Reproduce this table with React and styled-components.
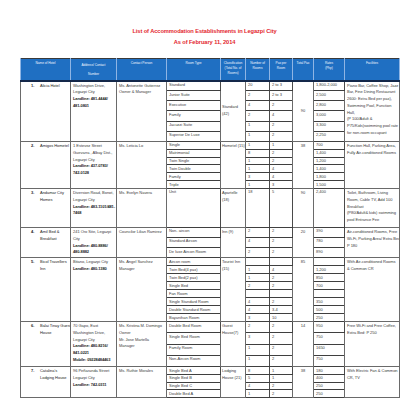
import React from "react";
import styled, { createGlobalStyle } from "styled-components";

const GlobalStyle = createGlobalStyle`
	html, body {
		margin: 0;
		padding: 0;
		background: #ffffff;
	}
	body {
		font-family: "Liberation Sans", Arial, sans-serif;
	}
`;

const Page = styled.div`
	width: 419px;
	height: 419px;
	padding-top: 26px;
	box-sizing: border-box;
	overflow: hidden;
`;

const Title = styled.div`
	text-align: center;
	color: #e3262d;
	font-weight: bold;
	font-size: 5.7px;
	letter-spacing: -0.08px;
	line-height: 11px;
	margin: 0 0 10px -10px;
`;

const Table = styled.table`
	width: 379px;
	margin-left: 20px;
	border-collapse: collapse;
	table-layout: fixed;
	border: 1px solid #3a3a3a;
	font-size: 4px;
	letter-spacing: -0.03px;
	color: #3c3c3c;
`;

const HeadRow = styled.tr`
	height: 22px;
	background: #1f6fc2;
	border-bottom: 2px solid #14284a;
`;

const HeadCell = styled.th`
	color: #f2f6ff;
	font-weight: normal;
	font-size: 3.2px;
	line-height: ${props => (props.$loose ? "9px" : "5px")};
	vertical-align: top;
	text-align: center;
	white-space: nowrap;
	padding: 1.5px 0 0 0;
	border-left: 1px solid #8fb5e4;
	border-right: 1px solid #8fb5e4;
`;

const Row = styled.tr`
	height: ${props => props.$h}px;
`;

const Cell = styled.td`
	border: 1px solid #6a6a6a;
	padding: 1px ${props => (props.$tight ? "1px" : "2px")};
	line-height: 6.8px;
	vertical-align: ${props => (props.$middle ? "middle" : "top")};
	text-align: ${props => (props.$center ? "center" : "left")};
	white-space: nowrap;
	overflow: hidden;
`;

const SubCell = styled.td`
	border: 1px solid #4a4a4a;
	border-bottom: ${props => (props.$last ? "1px" : "1.5px")} solid #3f3f3f;
	padding: 0.5px 2px;
	line-height: 5.5px;
	vertical-align: top;
	white-space: nowrap;
	overflow: hidden;
	color: #404040;
`;

const Line = styled.div`
	font-weight: ${props => (props.$bold ? "bold" : "normal")};
	letter-spacing: ${props => (props.$bold ? "-0.12px" : "inherit")};
	color: ${props => (props.$bold ? "#1c1c1c" : "inherit")};
`;

const NameWrap = styled.div`
	display: flex;
	font-weight: bold;
	color: #1c1c1c;
	padding-left: 8px;
`;

const Num = styled.span`
	width: 9px;
	flex: none;
`;

const hotels = [
	{
		no: 1,
		name: ["Alicia Hotel"],
		h: 10.17,
		middle: true,
		address: ["Washington Drive,", "Legazpi City"],
		phone: ["Landline: 481-4444/", "481-0801"],
		contact: ["Ms. Antonette Gutierrez", "Owner & Manager"],
		cls: ["Standard", "(42)"],
		total: "90",
		fac: [
			"Piano Bar, Coffee Shop, Jazz",
			"Bar, Fine Dining Restaurant",
			"2600: Extra Bed per pax),",
			"Swimming Pool, Function",
			"Hall,",
			"(P 100/Adult &",
			"P75/Kids)swimming pool rate",
			"for non-room occupant",
		],
		rooms: [
			["Standard", "20", "2 to 3", "1,800-2,000"],
			["Junior Suite", "2", "2 to 3", "2,500"],
			["Executive", "4", "2", "2,800"],
			["Family", "2", "4", "3,000"],
			["Jacuzzi Suite", "1", "2", "3,300"],
			["Superior De Luxe", "1", "2", "2,250"],
		],
	},
	{
		no: 2,
		name: ["Amigos Hometel"],
		h: 7.83,
		address: ["1 Estevez Street", "Guevarra , Albay Dist.,", "Legazpi City"],
		phone: ["Landline: 437-0783/", "742-0128"],
		contact: ["Ms. Leticia Lo"],
		cls: ["Hometel (15)"],
		total: "38",
		fac: ["Function Hall, Parking Area,", "Fully Air-conditioned Rooms"],
		rooms: [
			["Single", "1", "1", "700"],
			["Matrimonial", "8", "2", "1,400"],
			["Twin Single", "1", "2", "1,200"],
			["Twin Double", "1", "4", "1,400"],
			["Family", "3", "4", "1,800"],
			["Triple", "1", "3", "1,500"],
		],
	},
	{
		no: 3,
		name: ["Andamar City", "Homes"],
		h: 39,
		address: ["Diversion Road, Bonot,", "Legazpi City"],
		phone: ["Landline: 483-1101/481-", "7468"],
		contact: ["Ms. Evelyn Navera"],
		cls: ["Apartelle", "(18)"],
		total: "90",
		fac: [
			"Toilet, Bathroom, Living",
			"Room, Cable TV, Add 100",
			"Breakfast",
			"(P80/Adult& kids) swimming",
			"pool Entrance Fee",
		],
		rooms: [["Unit", "18", "5", "2,400"]],
	},
	{
		no: 4,
		name: ["Amil Bed &", "Breakfast"],
		h: 10,
		address: ["241 Oro Site, Legazpi", "City"],
		phone: ["Landline: 480-8886/", "480-8882"],
		contact: ["Councilor Lilian Ramirez"],
		cls: ["Inn (9)"],
		total: "20",
		fac: ["Air-conditioned Rooms, Free", "Wi-Fi, Parking Area/ Extra Bed", "P 180"],
		rooms: [
			["Non- aircon", "2", "2", "390"],
			["Standard Aircon", "4", "2", "780"],
			["De luxe Aircon Room", "2", "2", "890"],
		],
	},
	{
		no: 5,
		name: ["Bicol Travellers", "Inn"],
		h: 8,
		address: ["Bitano, Legazpi City"],
		phone: ["Landline: 480-1380"],
		contact: ["Ms. Angel Sanchez", "Manager"],
		cls: ["Tourist Inn", "(15)"],
		total: "85",
		fac: ["With Air-conditioned Rooms", "& Common CR"],
		rooms: [
			["Aircon room", "", "", ""],
			["Twin Bed(4 pax)", "1", "4", "1,200"],
			["Twin Bed(2 pax)", "1", "2", "850"],
			["Single Bed", "2", "2", "700"],
			["Fan Room", "", "", ""],
			["Single Standard Room", "4", "2", "350"],
			["Double Standard Room", "4", "3-4", "500"],
			["Bayanihan Room", "3", "10", "250"],
		],
	},
	{
		no: 6,
		name: ["Balai Tinay Guest", "House"],
		h: 11.25,
		address: ["70 Gapo, East", "Washington Drive,", "Legazpi City"],
		phone: ["Landline: 480-8216/", "841-0221", "Mobile: 09228484463"],
		contact: ["Ms. Kristina M. Domingo", "Owner", "Mr. Jose Martella", "Manager"],
		cls: ["Guest", "House(7)"],
		total: "14",
		fac: ["Free Wi-Fi and Free Coffee,", "Extra Bed: P 250"],
		rooms: [
			["Double Bed Room", "2", "2", "950"],
			["Single Bed Room", "3", "2", "750"],
			["Family Room", "1", "2", "1650"],
			["Non-Aircon Room", "1", "2", "750"],
		],
	},
	{
		no: 7,
		name: ["Catalina's", "Lodging House"],
		h: 7.75,
		address: ["96 Peñaranda Street", "Legazpi City"],
		phone: ["Landline: 742-0311"],
		contact: ["Ms. Ruthie Morales"],
		cls: ["Lodging", "House (21)"],
		total: "38",
		fac: ["With Electric Fan & Common", "CR, TV"],
		rooms: [
			["Single Bed A", "8", "1", "180"],
			["Single Bed B", "5", "1", "400"],
			["Single Bed C", "4", "2", "250"],
			["Double Bed A", "1", "2", "250"],
		],
	},
];

const widths = [50, 46, 50, 54, 25, 24, 23, 21, 31, 55];

const Lines = ({ items, bold }) => items.map((t, i) => <Line key={i} $bold={bold}>{t}</Line>);

export default function App() {
	return (
		<Page>
			<GlobalStyle />
			<Title>
				<div>List of Accommodation Establishments in Legazpi City</div>
				<div>As of February 11, 2014</div>
			</Title>
			<Table>
				<colgroup>
					{widths.map((w, i) => (
						<col key={i} style={{ width: w }} />
					))}
				</colgroup>
				<thead>
					<HeadRow>
						<HeadCell>Name of Hotel</HeadCell>
						<HeadCell $loose>
							Address/ Contact
							<br />
							Number
						</HeadCell>
						<HeadCell>Contact Person</HeadCell>
						<HeadCell>Room Type</HeadCell>
						<HeadCell>
							Classification
							<br />
							(Total No. of
							<br />
							Rooms)
						</HeadCell>
						<HeadCell>
							Number of
							<br />
							Rooms
						</HeadCell>
						<HeadCell>
							Pax per
							<br />
							Room
						</HeadCell>
						<HeadCell>Total Pax</HeadCell>
						<HeadCell>
							Rates
							<br />
							(Php)
						</HeadCell>
						<HeadCell>Facilities</HeadCell>
					</HeadRow>
				</thead>
				<tbody>
					{hotels.flatMap(hotel => {
						const n = hotel.rooms.length;
						return hotel.rooms.map((room, i) => {
							const last = i === n - 1;
							return (
								<Row key={hotel.no + "-" + i} $h={hotel.h}>
									{i === 0 && (
										<>
											<Cell rowSpan={n}>
												<NameWrap>
													<Num>{hotel.no}.</Num>
													<div>
														<Lines items={hotel.name} />
													</div>
												</NameWrap>
											</Cell>
											<Cell rowSpan={n}>
												<Lines items={hotel.address} />
												<Lines items={hotel.phone} bold />
											</Cell>
											<Cell rowSpan={n}>
												<Lines items={hotel.contact} />
											</Cell>
										</>
									)}
									<SubCell $last={last}>{room[0]}</SubCell>
									{i === 0 && (
										<Cell rowSpan={n} $tight $middle={hotel.middle}>
											<Lines items={hotel.cls} />
										</Cell>
									)}
									<SubCell $last={last}>{room[1]}</SubCell>
									<SubCell $last={last}>{room[2]}</SubCell>
									{i === 0 && (
										<Cell rowSpan={n} $center $middle={hotel.middle}>
											{hotel.total}
										</Cell>
									)}
									<SubCell $last={last}>{room[3]}</SubCell>
									{i === 0 && (
										<Cell rowSpan={n}>
											<Lines items={hotel.fac} />
										</Cell>
									)}
								</Row>
							);
						});
					})}
				</tbody>
			</Table>
		</Page>
	);
}
